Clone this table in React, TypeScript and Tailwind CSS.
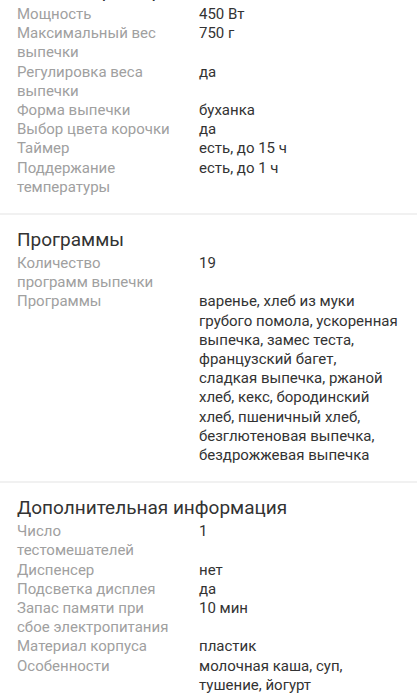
import React from "react"

type Row = { label: string; value: string }

const sections: { title: string; rows: Row[] }[] = [
  {
    title: "Общие характеристики",
    rows: [
      { label: "Мощность", value: "450 Вт" },
      { label: "Максимальный вес выпечки", value: "750 г" },
      { label: "Регулировка веса выпечки", value: "да" },
      { label: "Форма выпечки", value: "буханка" },
      { label: "Выбор цвета корочки", value: "да" },
      { label: "Таймер", value: "есть, до 15 ч" },
      { label: "Поддержание температуры", value: "есть, до 1 ч" },
    ],
  },
  {
    title: "Программы",
    rows: [
      { label: "Количество программ выпечки", value: "19" },
      {
        label: "Программы",
        value:
          "варенье, хлеб из муки грубого помола, ускоренная выпечка, замес теста, французский багет, сладкая\u00a0выпечка, ржаной хлеб, кекс, бородинский хлеб, пшеничный хлеб, безглютеновая выпечка, бездрожжевая выпечка",
      },
    ],
  },
  {
    title: "Дополнительная информация",
    rows: [
      { label: "Число тестомешателей", value: "1" },
      { label: "Диспенсер", value: "нет" },
      { label: "Подсветка дисплея", value: "да" },
      { label: "Запас памяти при сбое электропитания", value: "10 мин" },
      { label: "Материал корпуса", value: "пластик" },
      { label: "Особенности", value: "молочная каша, суп, тушение, йогурт" },
    ],
  },
]

function Section({ title, rows, last }: { title: string; rows: Row[]; last?: boolean }) {
  return (
    <section>
      <div className="px-[17px] pt-[13px] pb-4">
        <h2 className="text-[19px] leading-[24px] text-[#333333] font-normal mb-[2px]">{title}</h2>
        <dl className="grid grid-cols-[156px_1fr] gap-x-[26px] text-[15px] leading-[19.2px]">
          {rows.map((row) => (
            <React.Fragment key={row.label}>
              <dt className="text-[#a0a0a0]">{row.label}</dt>
              <dd className="text-[#333333]">{row.value}</dd>
            </React.Fragment>
          ))}
        </dl>
      </div>
      {!last && <div className="h-[2px] bg-[#f1f1f1]" />}
    </section>
  )
}

export default function App() {
  return (
    <div className="w-[417px] h-[698px] overflow-hidden bg-white font-['Roboto',sans-serif]">
      {/* page is scrolled: the first title sits above the fold */}
      <div className="-mt-[34px]">
        {sections.map((s, i) => (
          <Section key={s.title} title={s.title} rows={s.rows} last={i === sections.length - 1} />
        ))}
      </div>
    </div>
  )
}
